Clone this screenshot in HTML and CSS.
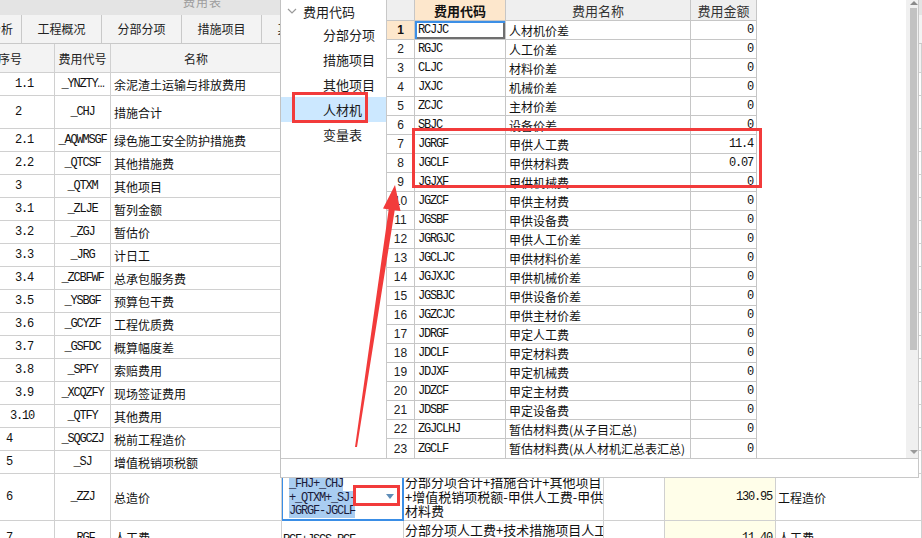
FILE: index.html
```html
<!DOCTYPE html>
<html lang="zh-CN">
<head>
<meta charset="utf-8">
<title>费用表</title>
<link rel="stylesheet" href="styles.css">
</head>
<body>
<div class="app">
  <div class="titlebar"><span class="title">费用表</span></div>
  <div class="tabs">
    <div class="tab first">造价分析</div>
    <div class="tab">工程概况</div>
    <div class="tab">分部分项</div>
    <div class="tab">措施项目</div>
    <div class="tab">其他项目</div>
  </div>
  <div class="sheet">
    <div class="row head">
      <div class="c-no">序号</div><div class="c-code">费用代号</div><div class="c-name center">名称</div><div></div><div></div><div></div><div></div><div></div>
    </div>
    <div class="row"><div class="mono n-a">1.1</div><div class="mono c-code">_YNZTY…</div><div class="c-name">余泥渣土运输与排放费用</div><div></div><div></div><div></div><div></div><div></div></div>
    <div class="row h33"><div class="mono n-a">2</div><div class="mono c-code">_CHJ</div><div class="c-name">措施合计</div><div></div><div></div><div></div><div></div><div></div></div>
    <div class="row"><div class="mono n-a">2.1</div><div class="mono c-code">_AQWMSGF</div><div class="c-name">绿色施工安全防护措施费</div><div></div><div></div><div></div><div></div><div></div></div>
    <div class="row"><div class="mono n-a">2.2</div><div class="mono c-code">_QTCSF</div><div class="c-name">其他措施费</div><div></div><div></div><div></div><div></div><div></div></div>
    <div class="row"><div class="mono n-a">3</div><div class="mono c-code">_QTXM</div><div class="c-name">其他项目</div><div></div><div></div><div></div><div></div><div></div></div>
    <div class="row"><div class="mono n-a">3.1</div><div class="mono c-code">_ZLJE</div><div class="c-name">暂列金额</div><div></div><div></div><div></div><div></div><div></div></div>
    <div class="row"><div class="mono n-a">3.2</div><div class="mono c-code">_ZGJ</div><div class="c-name">暂估价</div><div></div><div></div><div></div><div></div><div></div></div>
    <div class="row"><div class="mono n-a">3.3</div><div class="mono c-code">_JRG</div><div class="c-name">计日工</div><div></div><div></div><div></div><div></div><div></div></div>
    <div class="row"><div class="mono n-a">3.4</div><div class="mono c-code">_ZCBFWF</div><div class="c-name">总承包服务费</div><div></div><div></div><div></div><div></div><div></div></div>
    <div class="row"><div class="mono n-a">3.5</div><div class="mono c-code">_YSBGF</div><div class="c-name">预算包干费</div><div></div><div></div><div></div><div></div><div></div></div>
    <div class="row"><div class="mono n-a">3.6</div><div class="mono c-code">_GCYZF</div><div class="c-name">工程优质费</div><div></div><div></div><div></div><div></div><div></div></div>
    <div class="row"><div class="mono n-a">3.7</div><div class="mono c-code">_GSFDC</div><div class="c-name">概算幅度差</div><div></div><div></div><div></div><div></div><div></div></div>
    <div class="row"><div class="mono n-a">3.8</div><div class="mono c-code">_SPFY</div><div class="c-name">索赔费用</div><div></div><div></div><div></div><div></div><div></div></div>
    <div class="row"><div class="mono n-a">3.9</div><div class="mono c-code">_XCQZFY</div><div class="c-name">现场签证费用</div><div></div><div></div><div></div><div></div><div></div></div>
    <div class="row"><div class="mono n-b">3.10</div><div class="mono c-code">_QTFY</div><div class="c-name">其他费用</div><div></div><div></div><div></div><div></div><div></div></div>
    <div class="row"><div class="mono n-c">4</div><div class="mono c-code">_SQGCZJ</div><div class="c-name">税前工程造价</div><div></div><div></div><div></div><div></div><div></div></div>
    <div class="row"><div class="mono n-c">5</div><div class="mono c-code">_SJ</div><div class="c-name">增值税销项税额</div><div></div><div></div><div></div><div></div><div></div></div>
    <div class="row h47">
      <div class="mono n-c">6</div><div class="mono c-code">_ZZJ</div><div class="c-name">总造价</div>
      <div class="fx sel">
        <div class="fx-text mono">
          <div><span class="hl">_FHJ+_CHJ</span></div>
          <div><span class="hl">+_QTXM+_SJ-</span></div>
          <div><span class="hl">JGRGF-JGCLF</span></div>
        </div>
        <div class="dd"><i class="tri-dd"></i></div>
      </div>
      <div class="desc"><div class="desc-lines"><div>分部分项合计+措施合计+其他项目</div><div>+增值税销项税额-甲供人工费-甲供</div><div>材料费</div></div></div>
      <div></div>
      <div class="amt mono">130.95</div>
      <div class="c-rem">工程造价</div>
    </div>
    <div class="row h34">
      <div class="mono n-c">7</div><div class="mono c-code">_RGF</div><div class="c-name">人工费</div>
      <div class="fx2 mono">RGF+JSCS_RGF</div>
      <div class="desc"><div class="desc-lines"><div>分部分项人工费+技术措施项目人工</div><div>费</div></div></div>
      <div></div>
      <div class="amt mono">11.40</div>
      <div class="c-rem">人工费</div>
    </div>
  </div>

  <div class="popup">
    <div class="pop-main">
      <div class="tree">
        <div class="tree-root">
          <svg class="chev" width="10" height="8" viewBox="0 0 10 8"><polyline points="1,2 5,6 9,2" fill="none" stroke="#9a9a9a" stroke-width="1.2"/></svg>
          <span>费用代码</span>
        </div>
        <div class="tree-item">分部分项</div>
        <div class="tree-item">措施项目</div>
        <div class="tree-item">其他项目</div>
        <div class="tree-item active">人材机</div>
        <div class="tree-item">变量表</div>
      </div>
      <div class="grid-area">
        <div class="g-row g-head">
          <div class="g-no"></div><div class="g-code-h">费用代码</div><div class="g-name-h">费用名称</div><div class="g-amt-h">费用金额</div>
        </div>
        <div class="g-row"><div class="g-no cur">1</div><div class="g-code mono focus">RCJJC</div><div class="g-name">人材机价差</div><div class="g-amt mono">0</div></div>
        <div class="g-row"><div class="g-no">2</div><div class="g-code mono">RGJC</div><div class="g-name">人工价差</div><div class="g-amt mono">0</div></div>
        <div class="g-row"><div class="g-no">3</div><div class="g-code mono">CLJC</div><div class="g-name">材料价差</div><div class="g-amt mono">0</div></div>
        <div class="g-row"><div class="g-no">4</div><div class="g-code mono">JXJC</div><div class="g-name">机械价差</div><div class="g-amt mono">0</div></div>
        <div class="g-row"><div class="g-no">5</div><div class="g-code mono">ZCJC</div><div class="g-name">主材价差</div><div class="g-amt mono">0</div></div>
        <div class="g-row"><div class="g-no">6</div><div class="g-code mono">SBJC</div><div class="g-name">设备价差</div><div class="g-amt mono">0</div></div>
        <div class="g-row"><div class="g-no">7</div><div class="g-code mono">JGRGF</div><div class="g-name">甲供人工费</div><div class="g-amt mono">11.4</div></div>
        <div class="g-row"><div class="g-no">8</div><div class="g-code mono">JGCLF</div><div class="g-name">甲供材料费</div><div class="g-amt mono">0.07</div></div>
        <div class="g-row"><div class="g-no">9</div><div class="g-code mono">JGJXF</div><div class="g-name">甲供机械费</div><div class="g-amt mono">0</div></div>
        <div class="g-row"><div class="g-no">10</div><div class="g-code mono">JGZCF</div><div class="g-name">甲供主材费</div><div class="g-amt mono">0</div></div>
        <div class="g-row"><div class="g-no">11</div><div class="g-code mono">JGSBF</div><div class="g-name">甲供设备费</div><div class="g-amt mono">0</div></div>
        <div class="g-row"><div class="g-no">12</div><div class="g-code mono">JGRGJC</div><div class="g-name">甲供人工价差</div><div class="g-amt mono">0</div></div>
        <div class="g-row"><div class="g-no">13</div><div class="g-code mono">JGCLJC</div><div class="g-name">甲供材料价差</div><div class="g-amt mono">0</div></div>
        <div class="g-row"><div class="g-no">14</div><div class="g-code mono">JGJXJC</div><div class="g-name">甲供机械价差</div><div class="g-amt mono">0</div></div>
        <div class="g-row"><div class="g-no">15</div><div class="g-code mono">JGSBJC</div><div class="g-name">甲供设备价差</div><div class="g-amt mono">0</div></div>
        <div class="g-row"><div class="g-no">16</div><div class="g-code mono">JGZCJC</div><div class="g-name">甲供主材价差</div><div class="g-amt mono">0</div></div>
        <div class="g-row"><div class="g-no">17</div><div class="g-code mono">JDRGF</div><div class="g-name">甲定人工费</div><div class="g-amt mono">0</div></div>
        <div class="g-row"><div class="g-no">18</div><div class="g-code mono">JDCLF</div><div class="g-name">甲定材料费</div><div class="g-amt mono">0</div></div>
        <div class="g-row"><div class="g-no">19</div><div class="g-code mono">JDJXF</div><div class="g-name">甲定机械费</div><div class="g-amt mono">0</div></div>
        <div class="g-row"><div class="g-no">20</div><div class="g-code mono">JDZCF</div><div class="g-name">甲定主材费</div><div class="g-amt mono">0</div></div>
        <div class="g-row"><div class="g-no">21</div><div class="g-code mono">JDSBF</div><div class="g-name">甲定设备费</div><div class="g-amt mono">0</div></div>
        <div class="g-row"><div class="g-no">22</div><div class="g-code mono">ZGJCLHJ</div><div class="g-name">暂估材料费(从子目汇总)</div><div class="g-amt mono">0</div></div>
        <div class="g-row"><div class="g-no">23</div><div class="g-code mono">ZGCLF</div><div class="g-name">暂估材料费(从人材机汇总表汇总)</div><div class="g-amt mono">0</div></div>
      </div>
      <div class="vscroll">
        <i class="arr-up"></i>
        <div class="thumb"></div>
        <i class="arr-down"></i>
      </div>
    </div>
    <div class="pop-foot"></div>
  </div>

  <svg class="marks" width="922" height="538" viewBox="0 0 922 538">
    <rect x="293.5" y="93.5" width="73" height="28" fill="none" stroke="#f23b3b" stroke-width="3"/>
    <rect x="413.5" y="129.5" width="347" height="57" fill="none" stroke="#f23b3b" stroke-width="3"/>
    <rect x="354.5" y="486.5" width="44" height="18" fill="none" stroke="#f23b3b" stroke-width="3"/>
    <polygon points="395,185 400.5,211 394.7,210.2 357,447 355,447 388.7,209.4 383,208.6" fill="#f23b3b"/>
  </svg>
</div>
</body>
</html>
```

FILE: styles.css
```css
html, body {
  margin: 0;
  padding: 0;
}
body {
  width: 922px;
  height: 538px;
  overflow: hidden;
  background: #fff;
  font-family: "Noto Sans CJK SC", "Liberation Sans", sans-serif;
  font-size: 12px;
  color: #111;
}
.app {
  position: relative;
  width: 922px;
  height: 538px;
  overflow: hidden;
}
.mono {
  font-family: "Liberation Mono", monospace;
  font-size: 12px;
  letter-spacing: -1.2px;
}

/* title + tabs */
.titlebar {
  height: 15px;
  background: #e4e4e4;
  overflow: hidden;
}
.title {
  display: block;
  padding-left: 183px;
  margin-top: -5px;
  line-height: 14px;
  font-size: 12px;
  color: #9c9c9c;
  letter-spacing: 1px;
}
.tabs {
  display: flex;
  height: 28px;
  margin-left: -58px;
  background: #f3f3f3;
  border-bottom: 1px solid #c9c9c9;
}
.tab {
  flex: none;
  width: 80px;
  box-sizing: border-box;
  border-right: 1px solid #c9c9c9;
  text-align: center;
  line-height: 28px;
  color: #222;
}
.tab.first {
  text-align: right;
  padding-right: 8px;
}

/* background sheet */
.sheet {
  margin-left: -34px;
  width: 956px;
}
.row {
  display: grid;
  grid-template-columns: 89px 56px 171px 122px 200px 61px 111px 1fr;
  height: 23px;
  background: #fff;
}
.row > div {
  box-sizing: border-box;
  border-right: 1px solid #d0d0d0;
  border-bottom: 1px solid #d0d0d0;
  display: flex;
  align-items: center;
  overflow: hidden;
  white-space: nowrap;
}
.row.head {
  height: 29px;
  background: #f3f3f3;
  color: #222;
}
.row.head > div {
  justify-content: center;
}
.row.h33 { height: 33px; }
.row.h47 { height: 47px; }
.row.h34 { height: 34px; }
.row > .c-code { justify-content: center; }
.row > .c-name { padding-left: 3px; }
.row.head > .c-name { padding-left: 0; }
.row > .n-a { padding-left: 49px; }
.row > .n-b { padding-left: 44px; }
.row > .n-c { padding-left: 40px; }
.row > .c-rem { padding-left: 2px; }

.row > .fx {
  box-shadow: inset 1px 0 0 #3a8ee6, inset -1px -1px 0 #3a8ee6;
  border-right-color: #3a8ee6;
  border-bottom-color: #3a8ee6;
  padding-left: 7px;
  align-items: stretch;
}
.fx-text {
  flex: 1;
  display: flex;
  flex-direction: column;
  justify-content: flex-start;
  padding-top: 4px;
  line-height: 13.5px;
  color: #1a1a3a;
}
.hl {
  background: #a9cdf1;
}
.dd {
  width: 20px;
  flex: none;
  display: flex;
  align-items: center;
  justify-content: flex-start;
  padding-left: 3px;
  box-sizing: border-box;
  padding-bottom: 2px;
}
.tri-dd {
  width: 0;
  height: 0;
  border-left: 4px solid transparent;
  border-right: 4px solid transparent;
  border-top: 5px solid #5e8db8;
}
.row > .fx2 {
  padding-left: 1px;
  padding-top: 4px;
}
.row > .desc {
  padding-left: 1px;
  font-size: 13px;
}
.desc-lines {
  line-height: 14.5px;
}
.row > .amt {
  background: #fffee9;
  justify-content: flex-end;
  padding-right: 3px;
}

/* popup */
.popup {
  position: absolute;
  left: 280px;
  top: 0;
  width: 639px;
  height: 478px;
  box-sizing: border-box;
  background: #fff;
  border-left: 1px solid #c2c2c2;
  border-right: 1px solid #c8c8c8;
  border-bottom: 1px solid #c8c8c8;
  display: flex;
  flex-direction: column;
}
.pop-main {
  display: flex;
  height: 458px;
  border-bottom: 1px solid #c8c8c8;
}
.pop-foot {
  height: 18px;
}
.tree {
  width: 106px;
  flex: none;
  box-sizing: border-box;
  border-right: 1px solid #c8c8c8;
  font-size: 13px;
  color: #1a1a1a;
}
.tree-root {
  height: 22px;
  display: flex;
  align-items: center;
  padding-left: 6px;
  gap: 6px;
}
.chev { display: block; }
.tree-item {
  height: 25px;
  line-height: 25px;
  padding-left: 42px;
}
.tree-item.active {
  background: #cce8ff;
}

/* grid */
.grid-area {
  flex: 1;
  overflow: hidden;
}
.g-row {
  display: grid;
  grid-template-columns: 28px 91px 185px 66px;
  height: 19px;
}
.g-row > div {
  box-sizing: border-box;
  border-right: 1px solid #c6c6c6;
  border-bottom: 1px solid #c6c6c6;
  display: flex;
  align-items: center;
  white-space: nowrap;
  overflow: hidden;
}
.g-row:last-child > div {
  border-bottom: none;
}
.g-head {
  height: 21px;
  color: #333;
}
.g-head > div {
  background: #efefef;
  justify-content: center;
  font-size: 13px;
}
.g-head > .g-code-h {
  background: #fde7cc;
  font-weight: bold;
  color: #111;
}
.g-no {
  justify-content: center;
  font-family: "Liberation Sans", sans-serif;
  font-size: 12px;
  color: #222;
}
.g-row > .g-no.cur {
  background: #fde7cc;
  font-weight: bold;
  color: #111;
}
.g-code {
  padding-left: 3px;
}
.g-row > .g-code.focus {
  box-shadow: inset 2px 2px 0 #3c8fe6, inset -2px -2px 0 #6f6f6f;
}
.g-name {
  padding-left: 3px;
}
.g-row > .g-amt {
  justify-content: flex-end;
  padding-right: 3px;
}

/* scrollbar */
.vscroll {
  width: 12px;
  flex: none;
  background: #f0f0f0;
  display: flex;
  flex-direction: column;
  align-items: center;
}
.arr-up {
  width: 0;
  height: 0;
  margin-top: 1px;
  margin-left: 4px;
  border-left: 4px solid transparent;
  border-right: 4px solid transparent;
  border-bottom: 4px solid #8a8a8a;
}
.thumb {
  width: 7px;
  height: 342px;
  margin-top: 3px;
  margin-left: 3px;
  background: #c2c2c2;
}
.arr-down {
  width: 0;
  height: 0;
  margin-top: auto;
  margin-bottom: 4px;
  margin-left: 4px;
  border-left: 4px solid transparent;
  border-right: 4px solid transparent;
  border-top: 4px solid #9a9a9a;
}

/* annotation overlay */
.marks {
  position: absolute;
  left: 0;
  top: 0;
  pointer-events: none;
}
```
